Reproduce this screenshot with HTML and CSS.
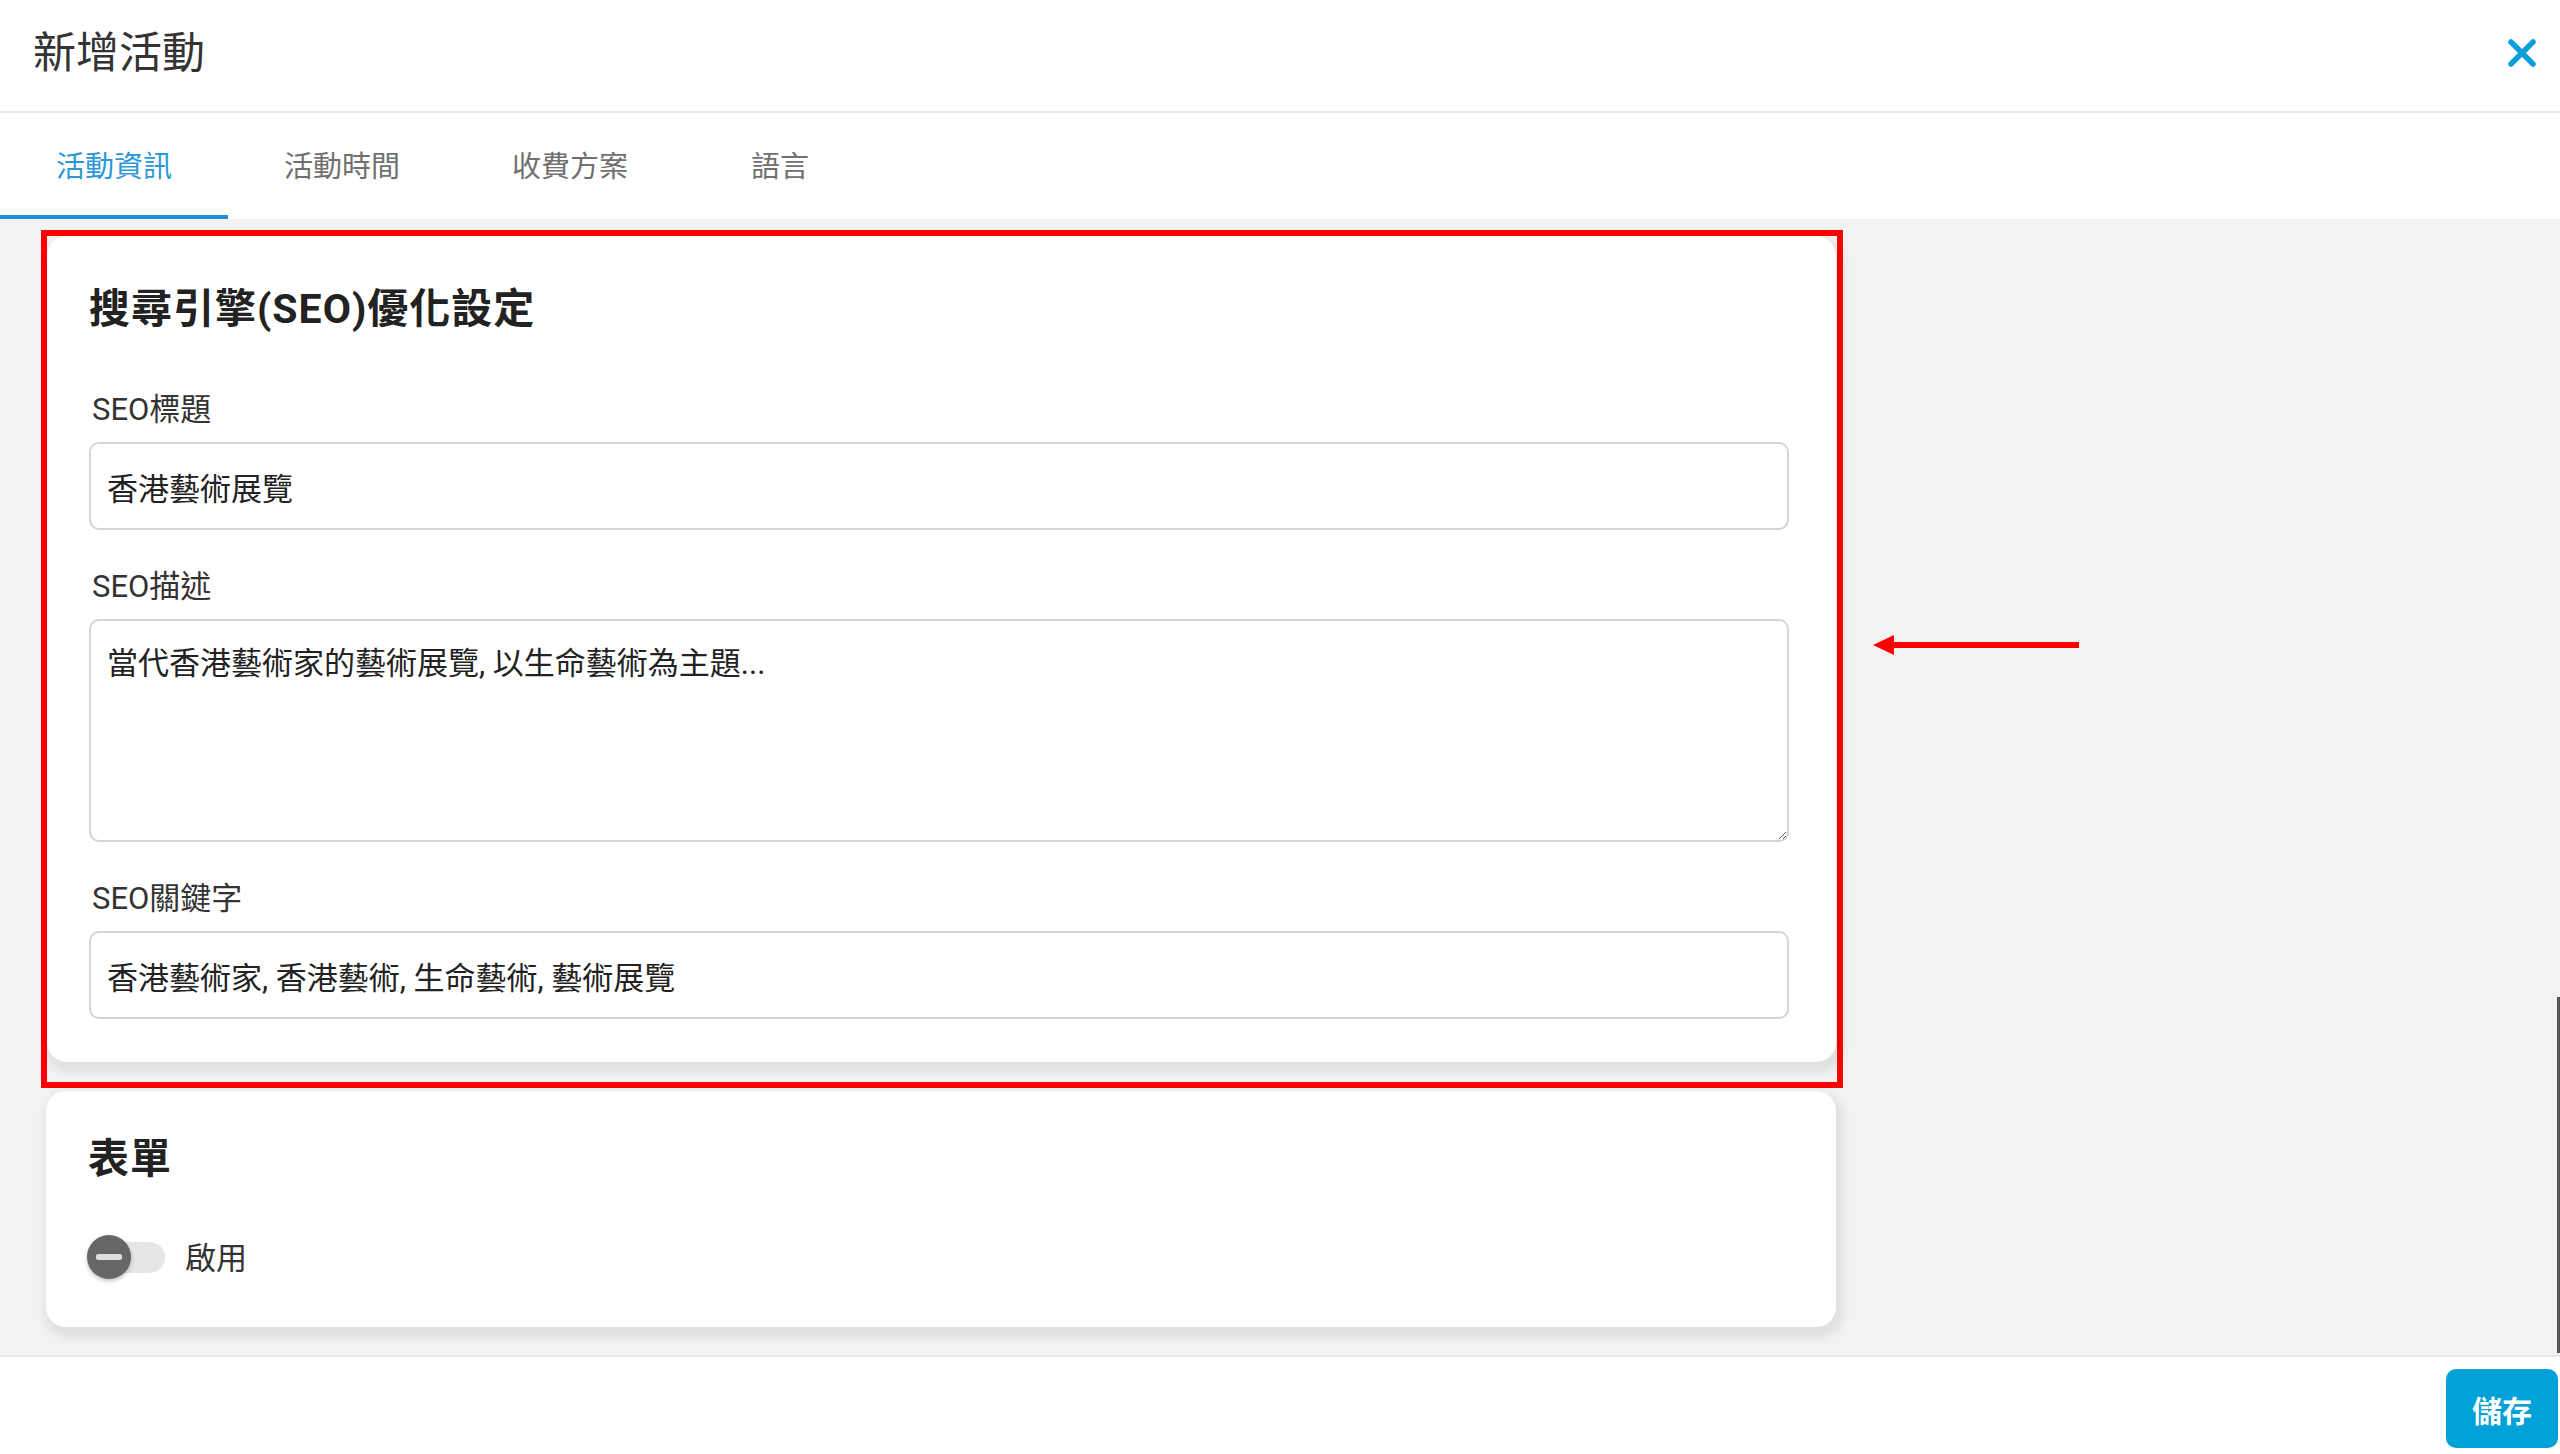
FILE: index.html
```html
<!DOCTYPE html>
<html lang="zh-Hant">

<head>
   <meta charset="UTF-8">
   <meta name="viewport" content="width=device-width, initial-scale=1.0">
   <title>新增活動</title>
   <link rel="stylesheet" href="styles.css">
</head>

<body>
   <header class="modal-header">
      <h1 class="modal-title">新增活動</h1>
      <button class="close-button" aria-label="close">
         <svg width="28" height="28" viewBox="0 0 28 28" fill="none" stroke="currentColor" stroke-width="5.5" stroke-linecap="round">
            <path d="M3 3L25 25M25 3L3 25"/>
         </svg>
      </button>
   </header>

   <nav class="tabs">
      <a class="tab active">活動資訊</a>
      <a class="tab">活動時間</a>
      <a class="tab">收費方案</a>
      <a class="tab">語言</a>
   </nav>

   <main class="content">
      <div class="column">
         <div class="highlight">
            <section class="card seo-card">
               <h2 class="card-title">搜尋引擎(SEO)優化設定</h2>
               <div class="field">
                  <label class="field-label">SEO標題</label>
                  <input class="field-input" type="text" value="香港藝術展覽">
               </div>
               <div class="field">
                  <label class="field-label">SEO描述</label>
                  <textarea class="field-input field-textarea">當代香港藝術家的藝術展覽, 以生命藝術為主題...</textarea>
               </div>
               <div class="field">
                  <label class="field-label">SEO關鍵字</label>
                  <input class="field-input" type="text" value="香港藝術家, 香港藝術, 生命藝術, 藝術展覽">
               </div>
            </section>
         </div>

         <section class="card form-card">
            <h2 class="card-title">表單</h2>
            <div class="switch-row">
               <span class="switch"><span class="switch-knob"></span></span>
               <span class="switch-label">啟用</span>
            </div>
         </section>
      </div>

      <svg class="note-arrow" width="206" height="20" viewBox="0 0 206 20">
         <polygon points="0,10 21,0 21,20" fill="#ff0000"/>
         <rect x="18" y="7" width="188" height="6" fill="#ff0000"/>
      </svg>
      <div class="scroll-thumb"></div>
   </main>

   <footer class="modal-footer">
      <button class="save-button">儲存</button>
   </footer>
</body>

</html>
```

FILE: styles.css
```css
html,
body {
   height: 100%;
}

body {
   margin: 0;
   display: flex;
   flex-direction: column;
   background-color: white;
   font-family: Roboto, "Noto Sans CJK TC", sans-serif;
   color: #333;
   overflow: hidden;
}

.modal-header {
   height: 113px;
   box-sizing: border-box;
   display: flex;
   justify-content: space-between;
   align-items: center;
   padding: 0 24px 0 33px;
   border-bottom: 2px solid #e8e8e8;
}

.modal-title {
   margin: 0 0 14px;
   font-size: 43px;
   font-weight: 400;
   color: #333;
}

.close-button {
   display: flex;
   padding: 0;
   margin-bottom: 6px;
   border: none;
   background: none;
   color: #0a9fdb;
   cursor: pointer;
}

.tabs {
   height: 106px;
   display: flex;
   background-color: white;
}

.tab {
   min-width: 192px;
   padding: 0 56px;
   box-sizing: border-box;
   display: flex;
   justify-content: center;
   align-items: center;
   font-size: 29px;
   color: #707070;
   border-bottom: 4px solid transparent;
   cursor: pointer;
}

.tab.active {
   color: #2b98d8;
   border-bottom-color: #1f8fd3;
}

.content {
   flex: 1;
   position: relative;
   background-color: #f2f2f2;
   padding: 11px 0 0 46px;
   overflow: hidden;
}

.column {
   width: 1790px;
}

.highlight {
   margin: 0 -7px 0 -5px;
   padding: 0 1px 20px 0;
   border: 6px solid #ff0000;
}

.card {
   background-color: white;
   border-radius: 20px;
   box-shadow: 3px 6px 8px 5px rgba(0, 0, 0, 0.07);
}

.seo-card {
   padding: 44px 47px 43px 42px;
}

.form-card {
   margin-top: 3px;
   padding: 39px 47px 47px 42px;
}

.card-title {
   margin: 0 0 49px;
   font-size: 41px;
   line-height: 58px;
   letter-spacing: 1px;
   font-weight: 700;
   color: #222;
}

.form-card .card-title {
   margin-bottom: 47px;
}

.field + .field {
   margin-top: 34px;
}

.field-label {
   display: block;
   margin-bottom: 10px;
   padding-left: 3px;
   font-size: 31px;
   line-height: 45px;
   color: #333;
}

.field-input {
   display: block;
   width: 100%;
   height: 88px;
   box-sizing: border-box;
   padding: 0 16px;
   border: 2px solid #d4d4d4;
   border-radius: 10px;
   font-family: inherit;
   font-size: 31px;
   color: #222;
   background-color: white;
   outline: none;
}

.field-textarea {
   height: 223px;
   padding: 20px 16px;
   line-height: 45px;
   resize: vertical;
}

.switch-row {
   display: flex;
   align-items: center;
   gap: 20px;
   height: 45px;
}

.switch {
   position: relative;
   width: 77px;
   height: 31px;
   border-radius: 16px;
   background-color: #e6e6e6;
}

.switch-knob {
   position: absolute;
   left: -1px;
   top: -7px;
   width: 44px;
   height: 44px;
   border-radius: 50%;
   background-color: #666;
   box-shadow: 0 2px 4px rgba(0, 0, 0, 0.25);
}

.switch-knob::after {
   content: "";
   position: absolute;
   left: 9px;
   top: 19px;
   width: 26px;
   height: 6px;
   border-radius: 2px;
   background-color: #ddd;
}

.switch-label {
   margin-bottom: 5px;
   font-size: 31px;
   color: #333;
}

.note-arrow {
   position: absolute;
   left: 1873px;
   top: 416px;
}

.scroll-thumb {
   position: absolute;
   right: 0;
   top: 778px;
   bottom: 2px;
   width: 3px;
   background-color: #555;
}

.modal-footer {
   height: 99px;
   box-sizing: border-box;
   display: flex;
   justify-content: flex-end;
   align-items: center;
   padding: 6px 2px 0 0;
   border-top: 2px solid #e6e6e6;
}

.save-button {
   width: 112px;
   height: 79px;
   border: none;
   border-radius: 10px;
   background-color: #00a0d8;
   color: white;
   font-family: inherit;
   font-size: 30px;
   font-weight: 600;
   cursor: pointer;
}
```
